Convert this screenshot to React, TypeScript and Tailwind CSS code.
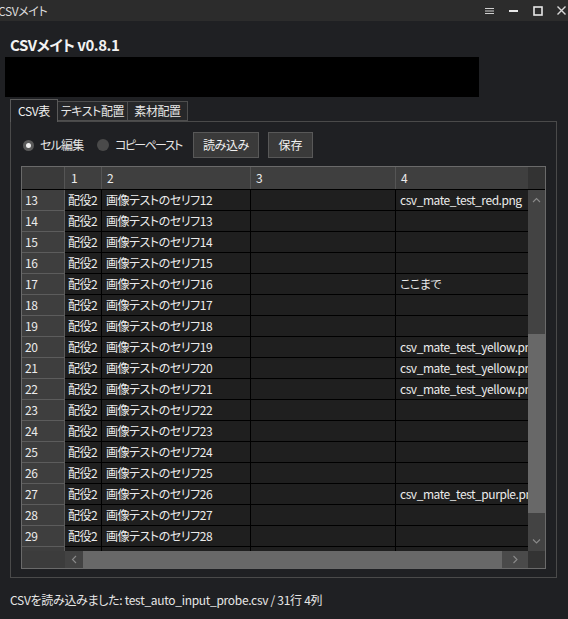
import React from "react";

const FONT = "[font-family:'Noto_Sans_CJK_JP','Noto_Sans',sans-serif] [font-feature-settings:'palt']";

const col4: Record<number, string> = {
  13: "csv_mate_test_red.png",
  17: "ここまで",
  20: "csv_mate_test_yellow.png",
  21: "csv_mate_test_yellow.png",
  22: "csv_mate_test_yellow.png",
  27: "csv_mate_test_purple.png",
};

const rows = Array.from({ length: 18 }, (_, i) => i + 13);

const WindowControls = () => (
  <div className="flex items-center gap-[10px] pr-[2px]">
    <svg width="9" height="8" viewBox="0 0 9 8" className="text-[#cfcfcf]">
      <path d="M0 1.5h9M0 4h9M0 6.5h9" stroke="currentColor" strokeWidth="1" />
    </svg>
    <svg width="9" height="8" viewBox="0 0 9 8" className="ml-[5px] text-[#e8e8e8]">
      <path d="M0 4h9" stroke="currentColor" strokeWidth="2" />
    </svg>
    <svg width="10" height="10" viewBox="0 0 10 10" className="ml-[5px] text-[#e8e8e8]">
      <rect x="1" y="1" width="8" height="8" fill="none" stroke="currentColor" strokeWidth="1.6" />
    </svg>
    <svg width="9" height="9" viewBox="0 0 9 9" className="ml-[4px] text-[#d8d8d8]">
      <path d="M0.5 0.5l8 8M8.5 0.5l-8 8" stroke="currentColor" strokeWidth="1.4" />
    </svg>
  </div>
);

const Chevron = ({ dir }: { dir: "up" | "down" | "left" | "right" }) => {
  const d = {
    up: "M1 5l3.5-3.5L8 5",
    down: "M1 1.5L4.5 5 8 1.5",
    left: "M5 1L1.5 4.5 5 8",
    right: "M1.5 1L5 4.5 1.5 8",
  }[dir];
  const horiz = dir === "left" || dir === "right";
  return (
    <svg width={horiz ? 7 : 9} height={horiz ? 9 : 7} viewBox={horiz ? "0 0 7 9" : "0 0 9 7"} className="text-[#8a8a8a]">
      <path d={d} fill="none" stroke="currentColor" strokeWidth="1.1" />
    </svg>
  );
};

const Grid = () => (
  <div className="w-[525px] h-[403px] border border-[#6a6a6a] flex flex-col bg-[#1f1f1f] text-[12px] tracking-[-0.45px] text-[#ececec]">
    {/* header row */}
    <div className="flex h-[23px] shrink-0 border-b border-black">
      <div className="flex-1 flex overflow-hidden">
        <div className="w-[43px] shrink-0 bg-[#3a3a3a] border-r border-[#555]" />
        <div className="w-[37px] shrink-0 bg-[#3f3f3f] border-r border-[#555] pl-[6px] flex items-center">1</div>
        <div className="w-[149px] shrink-0 bg-[#3f3f3f] border-r border-[#555] pl-[5px] flex items-center">2</div>
        <div className="w-[145px] shrink-0 bg-[#3f3f3f] border-r border-[#555] pl-[5px] flex items-center">3</div>
        <div className="w-[160px] shrink-0 bg-[#3f3f3f] pl-[5px] flex items-center">4</div>
      </div>
      <div className="w-[17px] shrink-0 bg-[#333]" />
    </div>
    {/* body */}
    <div className="flex flex-1 overflow-hidden">
      <div className="flex-1 overflow-hidden">
        {rows.map((r) => (
          <div key={r} className="flex h-[21px]">
            <div className="w-[43px] shrink-0 bg-[#3e3e3e] border-r border-b border-[#5c5c5c] pl-[3px] flex items-center">
              {r}
            </div>
            <div className="w-[37px] shrink-0 border-r border-b border-black pl-[3px] flex items-center whitespace-nowrap overflow-hidden">
              配役2
            </div>
            <div className="w-[149px] shrink-0 border-r border-b border-black pl-[4px] flex items-center whitespace-nowrap overflow-hidden">
              画像テストのセリフ{r - 1}
            </div>
            <div className="w-[145px] shrink-0 border-r border-b border-black" />
            <div className="w-[160px] shrink-0 border-b border-black pl-[4px] flex items-center whitespace-nowrap overflow-hidden">
              {col4[r] ?? ""}
            </div>
          </div>
        ))}
      </div>
      <div className="w-[17px] shrink-0 flex flex-col bg-[#434343]">
        <div className="h-[20px] flex items-center justify-center">
          <Chevron dir="up" />
        </div>
        <div className="h-[124px]" />
        <div className="h-[179px] bg-[#686868]" />
        <div className="flex-1 flex items-end justify-center pb-[6px]">
          <Chevron dir="down" />
        </div>
      </div>
    </div>
    {/* horizontal scrollbar */}
    <div className="flex h-[17px] shrink-0">
      <div className="w-[43px] shrink-0 bg-[#3c3c3c]" />
      <div className="w-[18px] shrink-0 bg-[#434343] flex items-center justify-center">
        <Chevron dir="left" />
      </div>
      <div className="w-[419px] shrink-0 bg-[#686868]" />
      <div className="flex-1 bg-[#4a4a4a] flex items-center justify-center">
        <Chevron dir="right" />
      </div>
      <div className="w-[17px] shrink-0 bg-[#333]" />
    </div>
  </div>
);

export default function App() {
  return (
    <div className={`w-[568px] h-[619px] overflow-hidden bg-[#1f2023] text-[#e6e6e6] flex flex-col ${FONT}`}>
      {/* title bar */}
      <div className="h-[21px] shrink-0 bg-[#2c2c2c] flex items-center justify-between">
        <span className="ml-[-2px] text-[12px] tracking-[-0.4px] text-[#dcdcdc] leading-none">CSVメイト</span>
        <WindowControls />
      </div>

      <div className="h-[36px] shrink-0 pl-[10px] pt-[14px]">
        <div className="text-[15px] tracking-[-0.5px] leading-[20px] font-bold text-[#f2f2f2]">CSVメイト v0.8.1</div>
      </div>

      <div className="ml-[5px] w-[474px] h-[40px] shrink-0 bg-black" />

      {/* tabs */}
      <div className="ml-[10px] mt-[2px] h-[22px] flex items-end shrink-0 relative z-10 text-[12px] tracking-[-0.4px]">
        <div className="w-[48px] h-[23px] mb-[-1px] bg-[#1f2023] border border-b-0 border-[#5a5a5a] flex items-center justify-center text-[#f0f0f0]">
          CSV表
        </div>
        <div className="w-[70px] h-[20px] bg-[#262729] border border-[#4e4e4e] border-l-0 flex items-center justify-center text-[#e6e6e6]">
          テキスト配置
        </div>
        <div className="w-[60px] h-[20px] bg-[#262729] border border-[#4e4e4e] border-l-0 flex items-center justify-center text-[#e6e6e6]">
          素材配置
        </div>
      </div>

      {/* tab panel */}
      <div className="ml-[10px] w-[547px] h-[457px] shrink-0 border border-[#4a4a4a] pl-[10px] pt-[10px]">
        <div className="flex items-center h-[26px] text-[12px]">
          <div className="ml-[2px] w-[11px] h-[11px] shrink-0 rounded-full bg-[#5a5a5a] flex items-center justify-center">
            <div className="w-[5px] h-[5px] rounded-full bg-[#f0f0f0]" />
          </div>
          <span className="ml-[6px] w-[57px] shrink-0 whitespace-nowrap tracking-[-0.8px]">セル編集</span>
          <div className="w-[12px] h-[12px] shrink-0 rounded-full bg-[#4a4a4a]" />
          <span className="ml-[6px] w-[78px] shrink-0 whitespace-nowrap tracking-[-1.6px]">コピーペースト</span>
          <button className="w-[66px] h-[26px] shrink-0 bg-[#3a3a3a] border border-[#585858] text-[#f0f0f0] tracking-[-0.4px]">
            読み込み
          </button>
          <button className="ml-[9px] w-[45px] h-[26px] shrink-0 bg-[#3a3a3a] border border-[#585858] text-[#f0f0f0]">
            保存
          </button>
        </div>
        <div className="mt-[8px]">
          <Grid />
        </div>
      </div>

      <div className="pl-[10px] mt-[14px] text-[12px] tracking-[-0.3px] leading-[16px] text-[#e6e6e6]">
        CSVを読み込みました: test_auto_input_probe.csv / 31行 4列
      </div>
    </div>
  );
}
